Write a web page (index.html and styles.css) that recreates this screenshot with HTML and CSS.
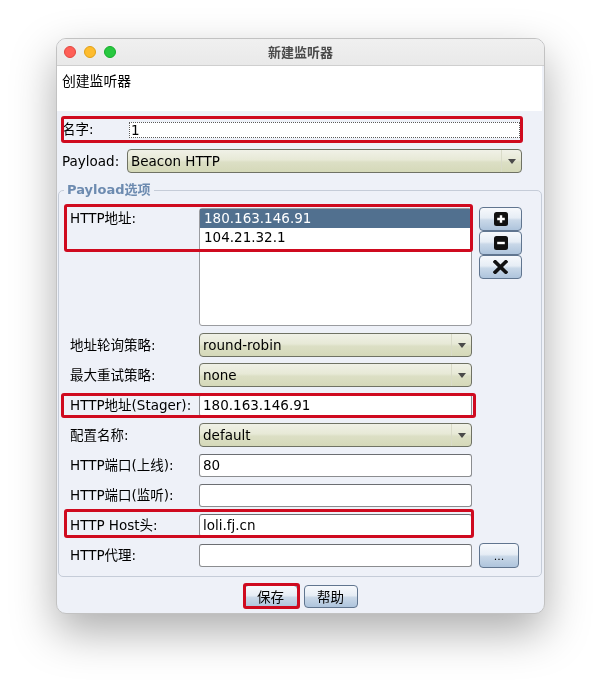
FILE: index.html
```html
<!DOCTYPE html>
<html lang="zh">
<head>
<meta charset="utf-8">
<title>新建监听器</title>
<link rel="stylesheet" href="styles.css">
</head>
<body>
<div class="stage">
<div class="window">
  <div class="titlebar">
    <div class="lights">
      <span class="light light-red"></span>
      <span class="light light-yellow"></span>
      <span class="light light-green"></span>
    </div>
    <div class="title">新建监听器</div>
    <div></div>
  </div>
  <div class="content">
    <div class="header">创建监听器</div>

    <div class="top-row name-row">
      <span class="lbl lbl-name">名字:</span>
      <div class="field text focus name-field">1</div>
      <span class="hl"></span>
    </div>
    <div class="top-row payload-row">
      <span class="lbl lbl-payload">Payload:</span>
      <div class="field combo payload-combo"><span class="val">Beacon HTTP</span><span class="arrow-box"><span class="arrow"></span></span></div>
    </div>

    <fieldset class="group">
      <legend>Payload选项</legend>

      <div class="grow list-row">
        <span class="lbl lbl-list">HTTP地址:</span>
        <div class="listbox">
          <div class="item selected">180.163.146.91</div>
          <div class="item">104.21.32.1</div>
        </div>
        <div class="side-buttons">
          <div class="btn icon-btn">
            <svg width="14" height="14" viewBox="0 0 14 14"><rect x="0" y="0" width="14" height="14" rx="2.5" fill="#111"/><path d="M7 3.2V10.8M3.2 7H10.8" stroke="#fff" stroke-width="2.4"/></svg>
          </div>
          <div class="btn icon-btn">
            <svg width="14" height="14" viewBox="0 0 14 14"><rect x="0" y="0" width="14" height="14" rx="2.5" fill="#111"/><path d="M3.2 7H10.8" stroke="#fff" stroke-width="2.4"/></svg>
          </div>
          <div class="btn icon-btn">
            <svg width="15" height="14" viewBox="0 0 15 14"><path d="M2.2 1.8L12.8 12.2M12.8 1.8L2.2 12.2" stroke="#111" stroke-width="3.6" stroke-linecap="square"/></svg>
          </div>
        </div>
        <span class="hl hl-list"></span>
      </div>

      <div class="grow">
        <span class="lbl">地址轮询策略:</span>
        <div class="field combo"><span class="val">round-robin</span><span class="arrow-box"><span class="arrow"></span></span></div>
      </div>
      <div class="grow">
        <span class="lbl">最大重试策略:</span>
        <div class="field combo"><span class="val">none</span><span class="arrow-box"><span class="arrow"></span></span></div>
      </div>
      <div class="grow">
        <span class="lbl">HTTP地址(Stager):</span>
        <div class="field text">180.163.146.91</div>
        <span class="hl hl-stager"></span>
      </div>
      <div class="grow">
        <span class="lbl">配置名称:</span>
        <div class="field combo"><span class="val">default</span><span class="arrow-box"><span class="arrow"></span></span></div>
      </div>
      <div class="grow">
        <span class="lbl">HTTP端口(上线):</span>
        <div class="field text">80</div>
      </div>
      <div class="grow">
        <span class="lbl">HTTP端口(监听):</span>
        <div class="field text"></div>
      </div>
      <div class="grow">
        <span class="lbl">HTTP Host头:</span>
        <div class="field text">loli.fj.cn</div>
        <span class="hl hl-host"></span>
      </div>
      <div class="grow">
        <span class="lbl">HTTP代理:</span>
        <div class="field text"></div>
        <div class="btn dots-btn">...</div>
      </div>
    </fieldset>

    <div class="actions">
      <div class="btn action-btn save-btn">保存<span class="hl hl-save"></span></div>
      <div class="btn action-btn">帮助</div>
    </div>
  </div>
</div>
</div>
</body>
</html>
```
FILE: styles.css
```css
* { box-sizing: border-box; }

html, body {
  margin: 0;
  padding: 0;
  background: #ffffff;
}

body {
  font-family: "DejaVu Sans", "Noto Sans CJK SC", sans-serif;
  font-size: 13.5px;
  color: #000;
}

.stage {
  width: 601px;
  height: 689px;
  padding: 38px 0 0 56px;
  background: #ffffff;
}

.window {
  width: 489px;
  height: 576px;
  border: 1px solid #c2c2c2;
  border-radius: 10px;
  background: #eef1f8;
  filter: drop-shadow(0 18px 22px rgba(0, 0, 0, 0.32));
  display: flex;
  flex-direction: column;
}

.titlebar {
  height: 27px;
  flex: none;
  background: linear-gradient(#f0f0f0, #e9e9e9);
  border-bottom: 1px solid #cfcfcf;
  border-radius: 9px 9px 0 0;
  display: grid;
  grid-template-columns: 1fr auto 1fr;
  align-items: center;
}

.lights {
  display: flex;
  gap: 8px;
  padding-left: 7px;
}

.light {
  width: 12px;
  height: 12px;
  border-radius: 50%;
}
.light-red { background: #fe5f57; border: 0.5px solid #e2463f; }
.light-yellow { background: #febc2e; border: 0.5px solid #e1a116; }
.light-green { background: #28c840; border: 0.5px solid #14ae2a; }

.title {
  font-family: "Noto Sans CJK SC", sans-serif;
  font-size: 13px;
  font-weight: 700;
  color: #4b4b4b;
  line-height: 16px;
}

.content {
  flex: 1;
  display: flex;
  flex-direction: column;
}

.header {
  height: 45px;
  margin-right: 2px;
  background: #ffffff;
  padding: 6px 5px 0;
  font-family: "Noto Sans CJK SC", sans-serif;
  font-size: 13.8px;
  line-height: 17px;
}

.top-row {
  position: relative;
  display: flex;
  align-items: center;
  margin-left: 5px;
  width: 460px;
}

.name-row {
  margin-top: 6px;
  height: 25px;
}

.payload-row {
  margin-top: 7px;
  height: 24px;
}

.lbl {
  flex: none;
  line-height: 17px;
  white-space: nowrap;
}

.lbl-name { width: 67px; }
.lbl-payload { width: 65px; }

.field {
  flex: none;
  background: #fff;
  white-space: nowrap;
  overflow: hidden;
}

.text {
  width: 273px;
  height: 23px;
  border: 1px solid #8b8d90;
  border-top-color: #6c6e72;
  border-radius: 3px;
  padding-left: 3px;
  line-height: 21px;
}

.name-field {
  width: 391px;
  height: 16px;
  line-height: 14px;
  padding-left: 1px;
  border: 1px dotted #5a5a5a;
  border-radius: 0;
}

.combo {
  width: 273px;
  height: 24px;
  display: flex;
  align-items: center;
  border: 1px solid #6f7264;
  border-radius: 4px;
  background: linear-gradient(to bottom, #f0f1e7 0%, #e7e9d6 45%, #dcdfc5 55%, #d5d9b9 100%);
  padding-left: 3px;
}

.payload-combo { width: 395px; }

.combo .val {
  flex: 1;
  line-height: 20px;
}

.arrow-box {
  width: 20px;
  height: 100%;
  border-left: 1px solid #d9dbc8;
  display: flex;
  align-items: center;
  justify-content: center;
}

.arrow {
  width: 0;
  height: 0;
  border-left: 4px solid transparent;
  border-right: 4px solid transparent;
  border-top: 5px solid #4a4a4a;
}

.hl {
  position: absolute;
  left: -1px;
  top: -1px;
  right: -1px;
  bottom: -1px;
  border: 3px solid #cf0a1f;
  border-radius: 3px;
  pointer-events: none;
}

.group {
  margin: 9px 2px 0 1px;
  padding: 10px 0 9px 11px;
  border: 1px solid #c5ccd8;
  border-radius: 5px;
  min-width: 0;
}

.group legend {
  margin-left: -6px;
  padding: 0 3px;
  font-size: 13px;
  font-weight: 700;
  line-height: 16px;
  color: #6d8bb0;
}

.grow {
  position: relative;
  display: flex;
  align-items: center;
  height: 24px;
  margin-top: 6px;
}

.grow .lbl { width: 129px; }

.list-row {
  height: 118px;
  margin-top: 0;
  align-items: flex-start;
}

.list-row + .grow { margin-top: 7px; }

.lbl-list { padding-top: 2px; }

.listbox {
  width: 273px;
  height: 118px;
  background: #fff;
  border: 1px solid #9a9ca0;
  border-radius: 3px;
}

.item {
  height: 19px;
  line-height: 19px;
  padding-left: 4px;
  white-space: nowrap;
}

.item.selected {
  background: #51708f;
  color: #fff;
}

.side-buttons {
  margin-left: 7px;
  margin-top: -1px;
  display: flex;
  flex-direction: column;
}

.btn {
  border: 1px solid #60758f;
  border-radius: 4px;
  background: linear-gradient(to bottom, #f7f9fc 0%, #e6edf5 45%, #c9d8e8 55%, #aec4dc 100%);
  display: flex;
  align-items: center;
  justify-content: center;
}

.icon-btn {
  width: 43px;
  height: 24px;
}

.hl-list { left: -6px; top: -4px; width: 409px; height: 48px; right: auto; bottom: auto; }
.hl-stager { left: -9px; top: 0; width: 415px; height: 25px; right: auto; bottom: auto; }
.hl-host { left: -6px; top: -4px; width: 410px; height: 29px; right: auto; bottom: auto; }

.dots-btn {
  margin-left: 7px;
  width: 40px;
  height: 25px;
  font-size: 11px;
  line-height: 12px;
  padding-top: 4px;
}

.actions {
  display: flex;
  justify-content: center;
  gap: 6px;
  margin-top: 8px;
}

.action-btn {
  position: relative;
  width: 54px;
  height: 23px;
  font-family: "Noto Sans CJK SC", sans-serif;
  font-size: 13.5px;
  line-height: 17px;
}

.hl-save { left: -2px; top: -3px; right: -3px; bottom: -2px; }
```
